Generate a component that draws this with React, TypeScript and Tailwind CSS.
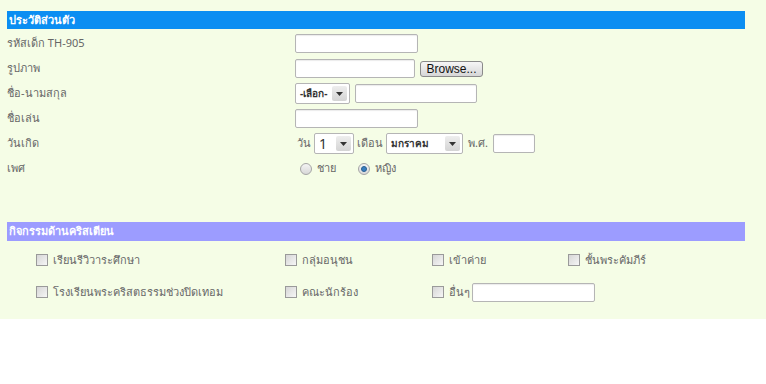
import React from 'react';

const font = { fontFamily: 'Tahoma, "Noto Sans", "DejaVu Sans", sans-serif' };

function TextBox({ w }: { w: string }) {
  return <div className={`h-[19px] ${w} border border-[#b5b5b5] bg-white rounded-[2px] shadow-[inset_0_1px_1px_rgba(0,0,0,0.08)]`} />;
}

function Arrow() {
  return (
    <div className="w-[15px] self-stretch m-[2px] ml-auto rounded-[2px] bg-gradient-to-b from-[#eeeeee] to-[#d4d4d4] flex items-center justify-center">
      <svg width="7" height="4" viewBox="0 0 7 4"><path d="M0 0h7L3.5 4z" fill="#333" /></svg>
    </div>
  );
}

function Select({ w, text, big }: { w: string; text: string; big?: boolean }) {
  return (
    <div className={`h-[21px] ${w} border border-[#b5b5b5] bg-white rounded-[2px] flex items-center`}>
      <span className={`pl-[4px] ${big ? 'text-[14px] text-[#333]' : 'text-[10px] font-bold text-[#333]'}`}>{text}</span>
      <Arrow />
    </div>
  );
}

function Radio({ checked }: { checked?: boolean }) {
  return (
    <div className="w-[12px] h-[12px] rounded-full border border-[#a5a5a5] bg-gradient-to-b from-[#f4f4f4] to-[#d8d8d8] flex items-center justify-center">
      {checked && <div className="w-[6px] h-[6px] rounded-full bg-[#3a7fc0] border border-[#2a5f90]" />}
    </div>
  );
}

function Check() {
  return <div className="w-[12px] h-[12px] border border-[#9a9a9a] bg-gradient-to-br from-[#d6d6d6] to-[#f6f6f6]" />;
}

function Row({ label, children }: { label: string; children?: React.ReactNode }) {
  return (
    <div className="h-[25px] flex items-center">
      <div className="w-[288px] text-[11px] text-[#666]">{label}</div>
      <div className="flex items-center">{children}</div>
    </div>
  );
}

function Activity({ label, w, children }: { label: string; w: string; children?: React.ReactNode }) {
  return (
    <div className={`${w} flex items-center gap-[5px]`}>
      <Check />
      <span className="text-[11px] text-[#666]">{label}</span>
      {children}
    </div>
  );
}

export default function App() {
  return (
    <div className="w-[766px] h-[384px] bg-white" style={font}>
      <div className="bg-[#f5fde6] pt-[11px] pl-[7px] pr-[21px] h-[319px]">
        <div className="h-[18px] bg-[#0b8ef2] flex items-center px-[2px] text-[11px] font-bold text-white">ประวัติส่วนตัว</div>
        <div className="mt-[2px]">
          <Row label="รหัสเด็ก TH-905">
            <TextBox w="w-[123px]" />
          </Row>
          <Row label="รูปภาพ">
            <TextBox w="w-[120px]" />
            <div className="ml-[5px] h-[16px] w-[63px] border border-[#8a8a8a] rounded-[3px] bg-gradient-to-b from-[#f6f6f6] to-[#d6d6d6] flex items-center justify-center text-[12px] text-[#111]" style={{ fontFamily: '"Liberation Sans", Arial, sans-serif' }}>
              Browse...
            </div>
          </Row>
          <Row label="ชื่อ-นามสกุล">
            <Select w="w-[55px]" text="-เลือก-" />
            <div className="ml-[5px]"><TextBox w="w-[122px]" /></div>
          </Row>
          <Row label="ชื่อเล่น">
            <TextBox w="w-[123px]" />
          </Row>
          <Row label="วันเกิด">
            <span className="text-[11px] text-[#666] ml-[2px] mr-[3px]">วัน</span>
            <Select w="w-[40px]" text="1" big />
            <span className="text-[11px] text-[#666] mx-[3px]">เดือน</span>
            <Select w="w-[77px]" text="มกราคม" />
            <span className="text-[11px] text-[#666] mx-[5px]">พ.ศ.</span>
            <TextBox w="w-[42px]" />
          </Row>
          <Row label="เพศ">
            <div className="ml-[5px] flex items-center gap-[5px]">
              <Radio />
              <span className="text-[11px] text-[#666]">ชาย</span>
            </div>
            <div className="ml-[22px] flex items-center gap-[5px]">
              <Radio checked />
              <span className="text-[11px] text-[#666]">หญิง</span>
            </div>
          </Row>
        </div>
        <div className="mt-[41px] h-[19px] bg-[#9c9cff] flex items-center px-[2px] text-[11px] font-bold text-white">กิจกรรมด้านคริสเตียน</div>
        <div className="pl-[29px]">
          <div className="h-[32px] mt-[3px] flex items-center">
            <Activity w="w-[249px]" label="เรียนรีวิวาระศึกษา" />
            <Activity w="w-[147px]" label="กลุ่มอนุชน" />
            <Activity w="w-[136px]" label="เข้าค่าย" />
            <Activity w="w-[150px]" label="ชั้นพระคัมภีร์" />
          </div>
          <div className="h-[32px] flex items-center">
            <Activity w="w-[249px]" label="โรงเรียนพระคริสตธรรมช่วงปิดเทอม" />
            <Activity w="w-[147px]" label="คณะนักร้อง" />
            <Activity w="w-[200px]" label="อื่นๆ">
              <div className="-ml-[3px]"><TextBox w="w-[123px]" /></div>
            </Activity>
          </div>
        </div>
      </div>
    </div>
  );
}
